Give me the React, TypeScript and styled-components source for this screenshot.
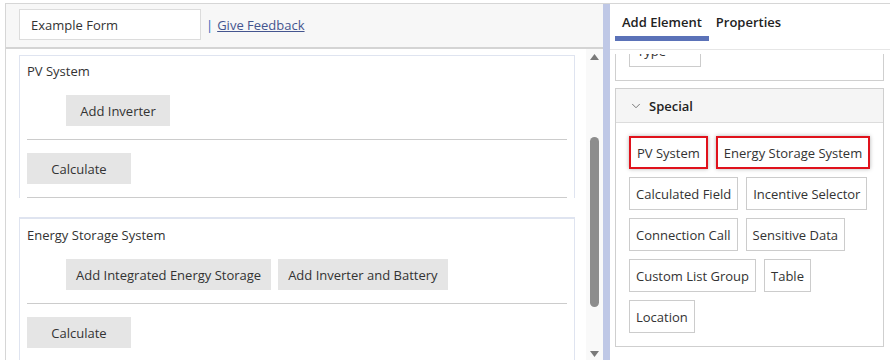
import React from 'react';
import styled, { createGlobalStyle } from 'styled-components';
import { ChevronDown } from 'lucide-react';

const GlobalStyle = createGlobalStyle`
    html, body {
        margin: 0;
        padding: 0;
        background: #ffffff;
        font-family: 'Open Sans', 'Noto Sans', sans-serif;
        font-size: 13px;
        color: #333333;
    }
    * {
        box-sizing: border-box;
    }
`;

const Page = styled.div`
    height: 360px;
    padding: 3px 0 0 5px;
    overflow: hidden;
`;

const Frame = styled.div`
    display: flex;
    height: 357px;
    border-top: 1px solid #d6d6d6;
    border-left: 1px solid #d6d6d6;
`;

const LeftPane = styled.div`
    display: flex;
    flex-direction: column;
    width: 597px;
    min-width: 0;
`;

const Header = styled.div`
    display: flex;
    flex: none;
    align-items: center;
    height: 45px;
    padding: 0 0 2px 13px;
    background: #f7f7f7;
    border-bottom: 2px solid #d4d4d4;
`;

const NameInput = styled.input`
    width: 182px;
    height: 31px;
    padding: 0 11px;
    border: 1px solid #dcdcdc;
    background: #ffffff;
    font-family: inherit;
    font-size: 13px;
    color: #333;
    outline: none;
`;

const Pipe = styled.span`
    margin: 0 4px 0 5px;
    color: #2b62b8;
`;

const FeedbackLink = styled.a`
    color: #44558f;
    text-decoration: underline;
    cursor: pointer;
`;

const Body = styled.div`
    display: flex;
    flex: 1;
    min-height: 0;
`;

const Canvas = styled.div`
    flex: 1;
    overflow: hidden;
    padding: 6px 11px 0 13px;
`;

const Card = styled.div<{ $first?: boolean }>`
    border: 1px solid #dfe4f0;
    border-top: ${({ $first }) => ($first ? '1px' : '2px')} solid #dfe4f0;
    border-bottom: none;
    padding: ${({ $first }) => ($first ? '5px' : '6px')} 7px 0;
    &:last-child {
        border-bottom: 1px solid #dfe4f0;
    }
`;

const CardTitle = styled.div`
    height: 20px;
    line-height: 20px;
`;

const ButtonRow = styled.div<{ $indent?: boolean }>`
    display: flex;
    gap: 7px;
    padding-left: ${({ $indent }) => ($indent ? '39px' : '0')};
    margin-top: ${({ $indent }) => ($indent ? '14px' : '13px')};
`;

const GrayButton = styled.button`
    min-width: 104px;
    height: 31px;
    padding: 0 10px;
    border: none;
    background: #e5e5e5;
    font-family: inherit;
    font-size: 13px;
    color: #333;
    cursor: pointer;
`;

const Rule = styled.hr<{ $last?: boolean }>`
    height: 0;
    margin: 13px 0 ${({ $last }) => ($last ? '19px' : '0')};
    border: none;
    border-top: 1px solid #cccccc;
`;

const ScrollTrack = styled.div`
    display: flex;
    flex-direction: column;
    align-items: center;
    width: 17px;
    background: #f9f9f9;
    padding: 5px 0 3px;
`;

const Arrow = styled.svg`
    width: 9px;
    height: 6px;
    flex: none;
`;

const ThumbArea = styled.div`
    flex: 1;
    width: 100%;
    display: flex;
    justify-content: center;
    padding-top: 77px;
`;

const Thumb = styled.div`
    width: 9px;
    height: 170px;
    border-radius: 5px;
    background: #8d8d8d;
`;

const Splitter = styled.div`
    width: 7px;
    flex: none;
    background: #bfc8e6;
`;

const RightPane = styled.div`
    display: flex;
    flex-direction: column;
    flex: 1;
    min-width: 0;
    background: #ffffff;
`;

const TabBar = styled.div`
    display: flex;
    flex: none;
    height: 46px;
    padding: 0 0 8px 5px;
    border-bottom: 1px solid #e6e6e6;
`;

const Tab = styled.div<{ $active?: boolean }>`
    display: flex;
    align-items: center;
    padding: 4px 7px 0;
    font-weight: 600;
    color: #222;
    border-bottom: 5px solid ${({ $active }) => ($active ? '#5b72b8' : 'transparent')};
    cursor: pointer;
`;

const Palette = styled.div`
    flex: 1;
    min-height: 0;
    overflow: hidden;
    padding: 4px 6px 0 5px;
    display: flex;
    flex-direction: column;
    gap: 7px;
`;

const ClippedSection = styled.div`
    flex: none;
    height: 27px;
    border: 1px solid #cfcfcf;
    border-top: none;
    overflow: hidden;
    display: flex;
    flex-direction: column;
    justify-content: flex-end;
    align-items: flex-start;
    padding: 0 13px 13px;
`;

const Section = styled.div`
    flex: none;
    border: 1px solid #cfcfcf;
`;

const SectionHeader = styled.div`
    display: flex;
    align-items: center;
    gap: 6px;
    height: 34px;
    padding-left: 13px;
    background: #f5f5f5;
    border-bottom: 1px solid #dcdcdc;
    font-weight: 600;
    color: #222;
`;

const Chips = styled.div`
    display: flex;
    flex-wrap: wrap;
    gap: 8px;
    padding: 13px 8px 13px 13px;
`;

const Chip = styled.button<{ $flagged?: boolean }>`
    flex: none;
    height: 33px;
    padding: 0 6px;
    border: ${({ $flagged }) => ($flagged ? '2px solid #e0121c' : '1px solid #cccccc')};
    background: #ffffff;
    font-family: inherit;
    font-size: 13px;
    color: #333;
    box-shadow: ${({ $flagged }) => ($flagged ? '0 0 4px rgba(0, 0, 0, 0.3)' : 'none')};
    cursor: pointer;
`;

const HiddenChip = styled(Chip)`
    flex: none;
    width: 72px;
    overflow: hidden;
    white-space: nowrap;
    text-align: left;
    padding: 0 7px;
`;

const specialItems = [
    { label: 'PV System', flagged: true },
    { label: 'Energy Storage System', flagged: true },
    { label: 'Calculated Field' },
    { label: 'Incentive Selector' },
    { label: 'Connection Call' },
    { label: 'Sensitive Data' },
    { label: 'Custom List Group' },
    { label: 'Table' },
    { label: 'Location' },
];

interface IFormCardProps {
    title: string;
    actions: string[];
    first?: boolean;
}

const FormCard: React.FC<IFormCardProps> = ({ title, actions, first }) => (
    <Card $first={first}>
        <CardTitle>{title}</CardTitle>
        <ButtonRow $indent>
            {actions.map((a) => (
                <GrayButton key={a}>{a}</GrayButton>
            ))}
        </ButtonRow>
        <Rule />
        <ButtonRow>
            <GrayButton>Calculate</GrayButton>
        </ButtonRow>
        <Rule $last />
    </Card>
);

export default function App() {
    return (
        <>
            <GlobalStyle />
            <Page>
                <Frame>
                    <LeftPane>
                        <Header>
                            <NameInput defaultValue="Example Form" />
                            <Pipe>|</Pipe>
                            <FeedbackLink>Give Feedback</FeedbackLink>
                        </Header>
                        <Body>
                            <Canvas>
                                <FormCard first title="PV System" actions={['Add Inverter']} />
                                <FormCard
                                    title="Energy Storage System"
                                    actions={['Add Integrated Energy Storage', 'Add Inverter and Battery']}
                                />
                            </Canvas>
                            <ScrollTrack>
                                <Arrow viewBox="0 0 9 6">
                                    <polygon points="4.5,0 9,6 0,6" fill="#7a7a7a" />
                                </Arrow>
                                <ThumbArea>
                                    <Thumb />
                                </ThumbArea>
                                <Arrow viewBox="0 0 9 6">
                                    <polygon points="0,0 9,0 4.5,6" fill="#7a7a7a" />
                                </Arrow>
                            </ScrollTrack>
                        </Body>
                    </LeftPane>
                    <Splitter />
                    <RightPane>
                        <TabBar>
                            <Tab $active>Add Element</Tab>
                            <Tab>Properties</Tab>
                        </TabBar>
                        <Palette>
                            <ClippedSection>
                                <HiddenChip>Type</HiddenChip>
                            </ClippedSection>
                            <Section>
                                <SectionHeader>
                                    <ChevronDown size={14} strokeWidth={1.5} color="#666" />
                                    Special
                                </SectionHeader>
                                <Chips>
                                    {specialItems.map((item) => (
                                        <Chip key={item.label} $flagged={item.flagged}>
                                            {item.label}
                                        </Chip>
                                    ))}
                                </Chips>
                            </Section>
                        </Palette>
                    </RightPane>
                </Frame>
            </Page>
        </>
    );
}
